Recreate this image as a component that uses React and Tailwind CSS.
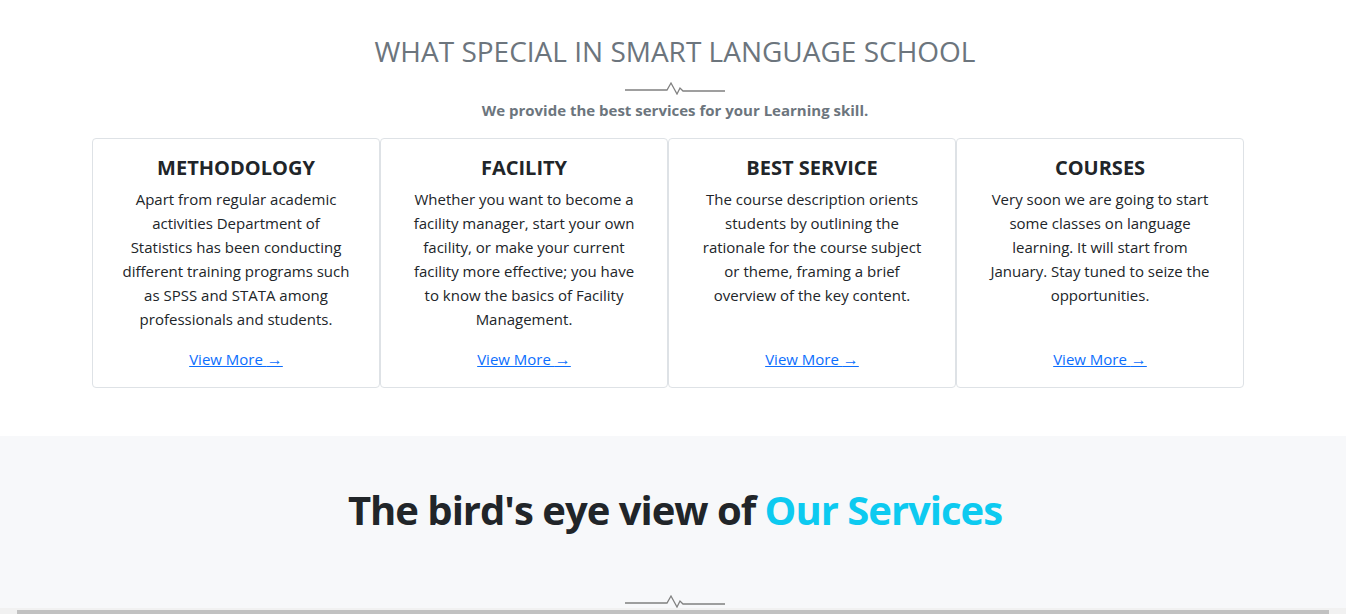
import React from "react";

const Pulse = () => (
  <svg width="100" height="14" viewBox="0 0 100 14" className="block">
    <polyline
      points="0,9 42,9 46,2 52,13 55,7 58,10 100,10"
      fill="none"
      stroke="#808080"
      strokeWidth="1.3"
    />
  </svg>
);

const cards = [
  {
    title: "METHODOLOGY",
    text: "Apart from regular academic activities Department of Statistics has been conducting different training programs such as SPSS and STATA among professionals and students.",
  },
  {
    title: "FACILITY",
    text: "Whether you want to become a facility manager, start your own facility, or make your current facility more effective; you have to know the basics of Facility Management.",
  },
  {
    title: "BEST SERVICE",
    text: "The course description orients students by outlining the rationale for the course subject or theme, framing a brief overview of the key content.",
  },
  {
    title: "COURSES",
    text: "Very soon we are going to start some classes on language learning. It will start from January. Stay tuned to seize the opportunities.",
  },
];

export default function App() {
  return (
    <div
      className="min-h-screen bg-white text-[#212529]"
      style={{ fontFamily: '"Open Sans", "Noto Sans", sans-serif' }}
    >
      <section className="pt-[31px] pb-[48px]">
        <h2 className="text-center text-[28px] leading-[40px] font-normal text-[#6c757d] pl-[4px]">
          WHAT SPECIAL IN SMART LANGUAGE SCHOOL
        </h2>
        <div className="flex justify-center mt-[10px] pl-[4px]">
          <Pulse />
        </div>
        <p className="text-center text-[15px] leading-[20px] font-bold text-[#6c757d] mt-[5px] pl-[4px]">
          We provide the best services for your Learning skill.
        </p>
        <div className="flex pl-[92px] pr-[102px] mt-[18px]">
          {cards.map((c) => (
            <div
              key={c.title}
              className="w-[288px] h-[250px] border border-[#dee2e6] rounded-[4px] flex flex-col items-center pt-[15px] pb-[16px] text-center"
            >
              <h4 className="text-[20px] leading-[28px] font-bold text-[#212529]">
                {c.title}
              </h4>
              <p className="mt-[5px] w-[230px] text-[15px] leading-[24px] text-[#212529]">
                {c.text}
              </p>
              <a
                href="#"
                className="mt-auto text-[15px] leading-[24px] text-[#0d6efd] underline"
              >
                View More <span className="text-[16px]">→</span>
              </a>
            </div>
          ))}
        </div>
      </section>
      <section className="bg-[#f7f8fa] pt-[46px] pb-[60px]">
        <h2 className="text-center text-[40px] leading-[56px] font-bold tracking-[-1px] text-[#212529] pl-[4px]">
          The bird's eye view of <span className="text-[#0dcaf0]">Our Services</span>
        </h2>
        <div className="flex justify-center mt-[56px] pl-[4px]">
          <Pulse />
        </div>
      </section>
      <div className="fixed left-0 right-0 bottom-0 h-[6px] bg-[#f1f1f1] flex items-end px-[17px]">
        <div className="h-[4px] w-full bg-[#c1c1c1]" />
      </div>
    </div>
  );
}
